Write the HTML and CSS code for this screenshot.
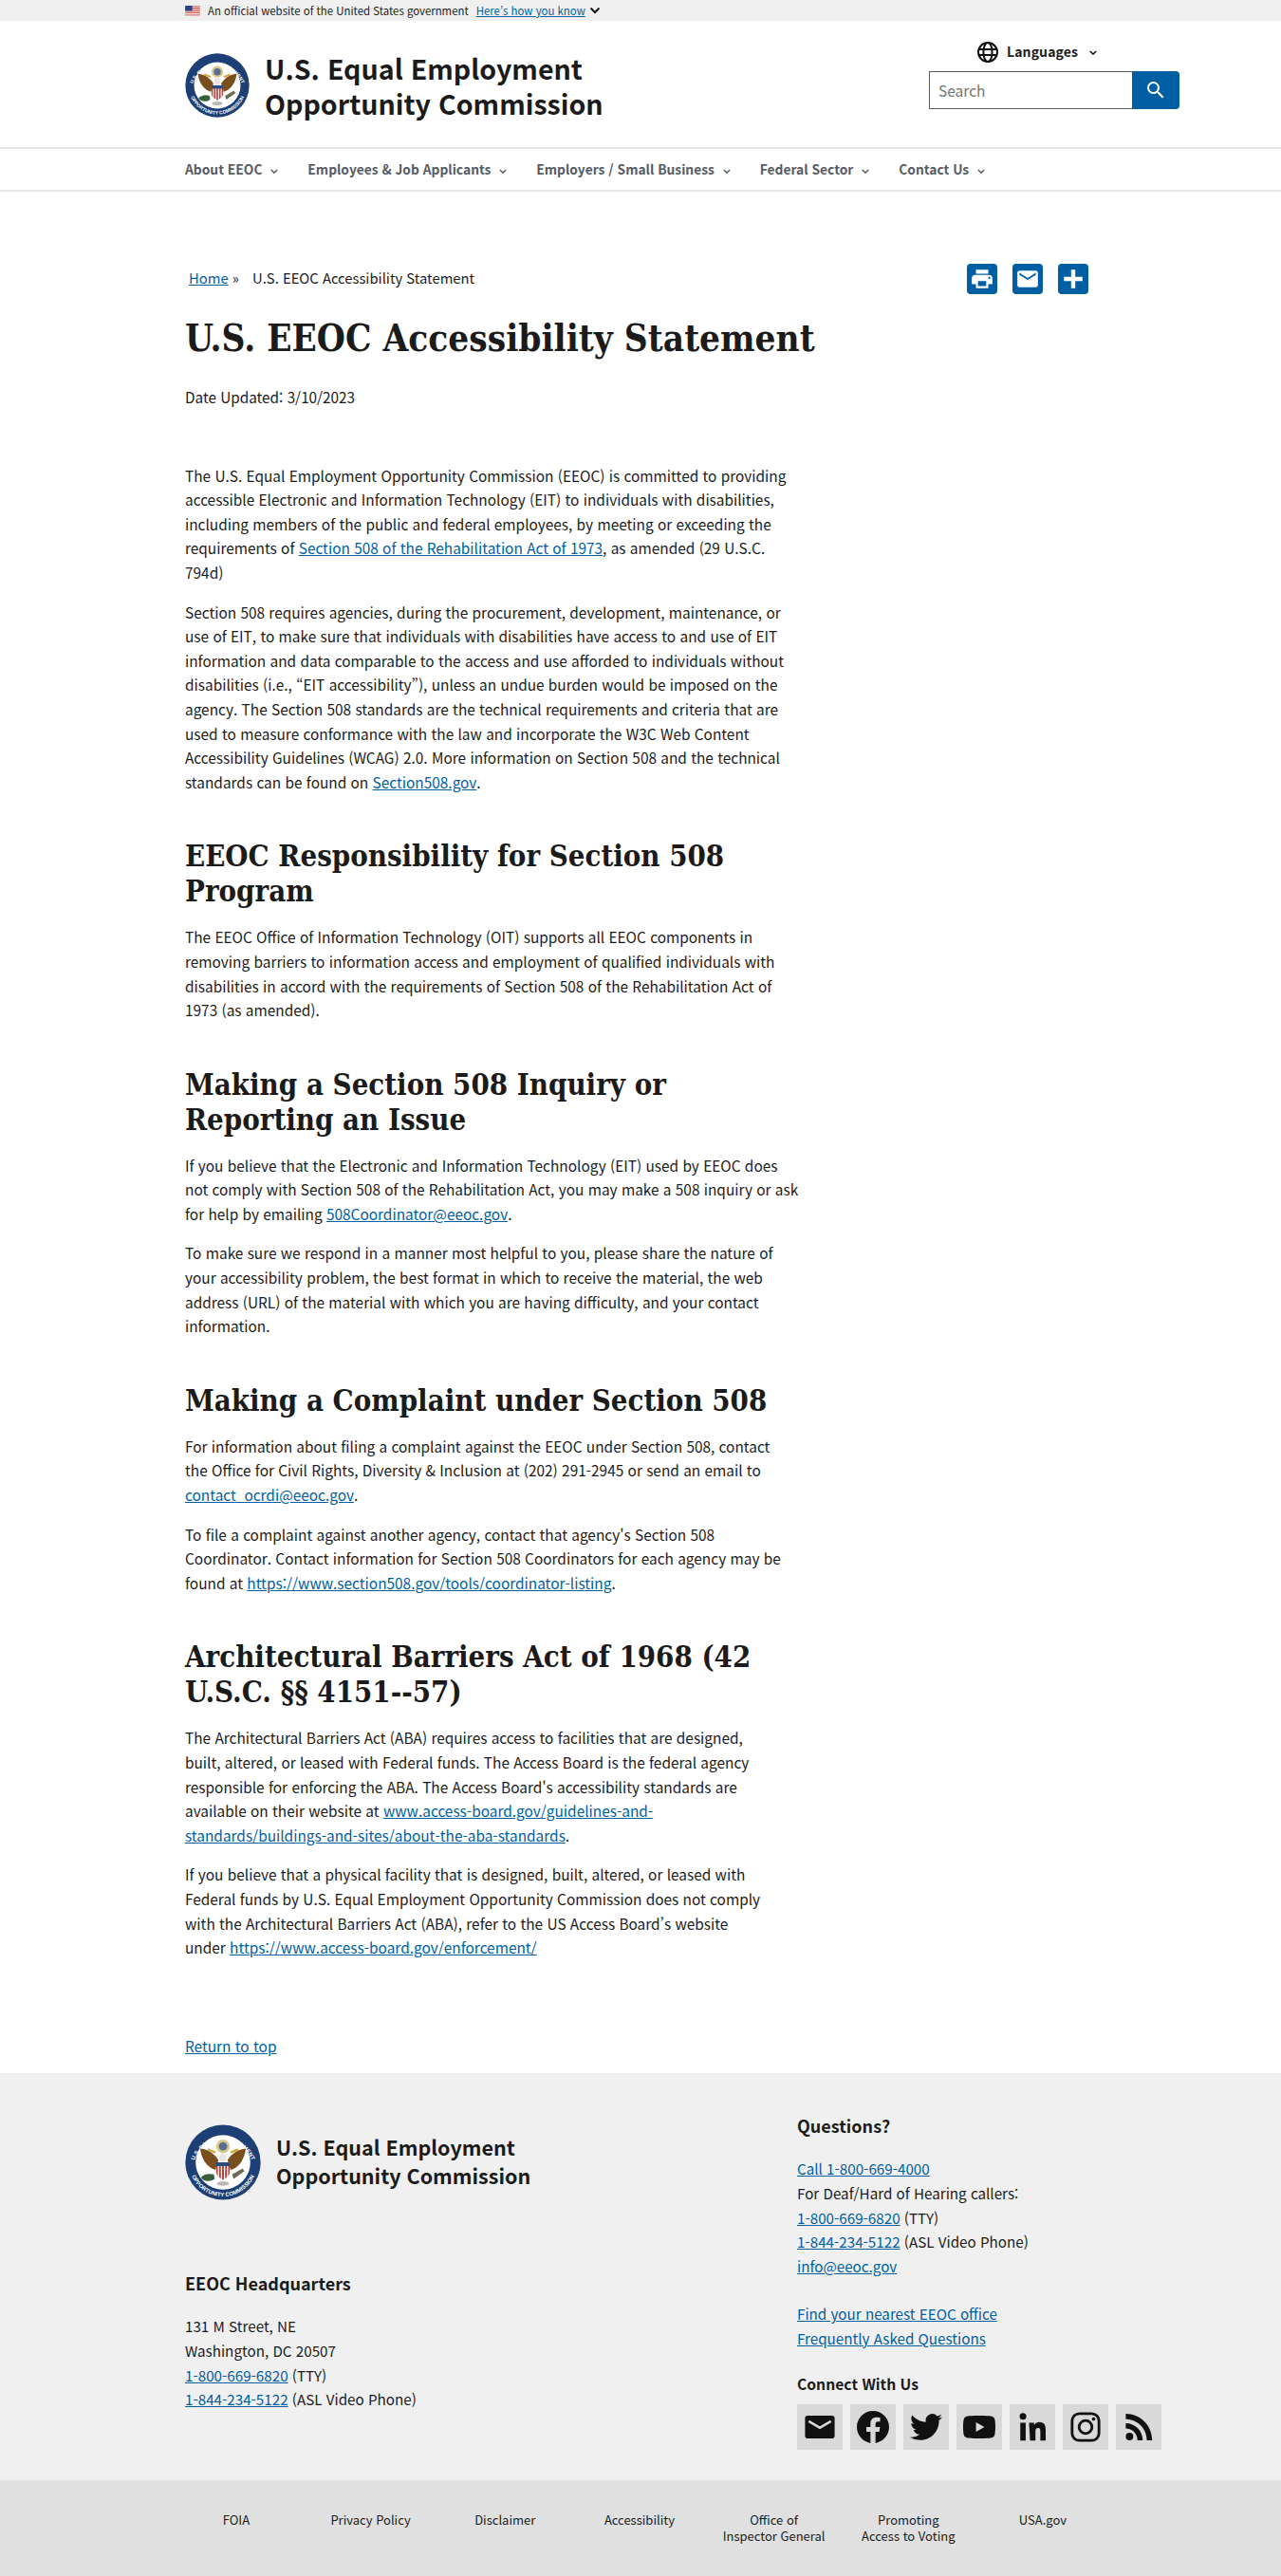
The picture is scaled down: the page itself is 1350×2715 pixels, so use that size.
FILE: index.html
```html
<!DOCTYPE html>
<html lang="ko">
<head>
  <meta charset="UTF-8">
  <meta name="viewport" content="width=device-width, initial-scale=1">
  <title>U.S. EEOC Accessibility Statement</title>
  <link rel="stylesheet" href="styles.css">
</head>
<body>
  <div class="gov-banner">
    <div class="wrap gov-inner">
      <svg class="flag" viewBox="0 0 20 14" width="16" height="11" aria-hidden="true">
        <rect width="20" height="14" fill="#fff"/>
        <path d="M0 1h20M0 3.2h20M0 5.4h20M0 7.6h20M0 9.8h20M0 12.6h20" stroke="#c8403a" stroke-width="1.2"/>
        <rect width="9.5" height="7" fill="#2b3f8c"/>
      </svg>
      <span>An official website of the United States government</span>
      <a href="#">Here’s how you know</a>
      <svg class="chev-black" viewBox="0 0 12 8" width="12" height="8" aria-hidden="true"><path d="M1.5 1.5 6 6l4.5-4.5" fill="none" stroke="#111" stroke-width="2"/></svg>
    </div>
  </div>

  <header class="site-header">
    <div class="wrap header-inner">
      <div class="brand">
        <svg class="brand-seal" viewBox="0 0 100 100" aria-hidden="true">
          <circle cx="50" cy="50" r="49.5" fill="#1d3f75"/>
          <circle cx="50" cy="50" r="36" fill="#fff"/>
          <path id="arcTop" d="M10 56 A40.5 40.5 0 0 1 90 56" fill="none"/>
          <path id="arcBot" d="M5 50 A45 45 0 0 0 95 50" fill="none"/>
          <text class="seal-text"><textPath href="#arcTop" startOffset="50%" text-anchor="middle">U.S. EQUAL EMPLOYMENT</textPath></text>
          <text class="seal-text"><textPath href="#arcBot" startOffset="50%" text-anchor="middle">OPPORTUNITY COMMISSION</textPath></text>
          <circle cx="50" cy="29" r="9" fill="#d9c98a"/>
          <circle cx="50" cy="29" r="5.5" fill="#5a6f8f"/>
          <path d="M44 47 C36 35 27 33 20 32 C21 43 27 56 40 60 Z" fill="#7a4f1e"/>
          <path d="M56 47 C64 35 73 33 80 32 C79 43 73 56 60 60 Z" fill="#7a4f1e"/>
          <path d="M40 37 L30 33 M60 37 L70 33" stroke="#d2a93f" stroke-width="3"/>
          <ellipse cx="50" cy="44" rx="5" ry="6" fill="#e8e6df"/>
          <path d="M41 50 H59 V62 C59 68 54 71 50 73 C46 71 41 68 41 62 Z" fill="#b5483e"/>
          <path d="M41 50 H59 V55 H41 Z" fill="#2b4a7d"/>
          <path d="M44 55 V71 M48 55 V73 M52 55 V73 M56 55 V71" stroke="#fff" stroke-width="1.5"/>
          <path d="M38 66 C30 64 24 66 21 70 C25 76 33 76 39 72 Z" fill="#38603a"/>
          <path d="M62 66 L76 58 L78 62 L64 72 Z" fill="#6b6a55"/>
          <ellipse cx="50" cy="78" rx="8" ry="3" fill="#b9b9b0"/>
        </svg>
        <div class="brand-name">U.S. Equal Employment<br>Opportunity Commission</div>
      </div>
      <div class="header-tools">
        <div class="lang">
          <svg viewBox="0 0 24 24" width="24" height="24" aria-hidden="true">
            <circle cx="12" cy="12" r="10" fill="none" stroke="#111" stroke-width="2"/>
            <ellipse cx="12" cy="12" rx="4.6" ry="10" fill="none" stroke="#111" stroke-width="2"/>
            <path d="M2.5 9h19M2.5 15h19" stroke="#111" stroke-width="2"/>
          </svg>
          <span>Languages</span>
          <svg class="chev" viewBox="0 0 10 6" width="8" height="5" aria-hidden="true"><path d="M1 1l4 4 4-4" fill="none" stroke="#111" stroke-width="1.8"/></svg>
        </div>
        <form class="search">
          <input type="text" placeholder="Search">
          <button type="button" aria-label="Search">
            <svg viewBox="0 0 24 24" width="24" height="24" aria-hidden="true"><path fill="#fff" d="M15.5 14h-.79l-.28-.27A6.471 6.471 0 0 0 16 9.5 6.5 6.5 0 1 0 9.5 16c1.61 0 3.09-.59 4.23-1.57l.27.28v.79l5 4.99L20.49 19l-4.99-5zm-6 0C7.01 14 5 11.99 5 9.5S7.01 5 9.5 5 14 7.01 14 9.5 11.99 14 9.5 14z"/></svg>
          </button>
        </form>
      </div>
    </div>
  </header>

  <nav class="main-nav">
    <div class="wrap nav-inner">
      <a href="#">About EEOC <svg viewBox="0 0 10 6" width="8" height="5" aria-hidden="true"><path d="M1 1l4 4 4-4" fill="none" stroke="#565c65" stroke-width="1.8"/></svg></a>
      <a href="#">Employees &amp; Job Applicants <svg viewBox="0 0 10 6" width="8" height="5" aria-hidden="true"><path d="M1 1l4 4 4-4" fill="none" stroke="#565c65" stroke-width="1.8"/></svg></a>
      <a href="#">Employers / Small Business <svg viewBox="0 0 10 6" width="8" height="5" aria-hidden="true"><path d="M1 1l4 4 4-4" fill="none" stroke="#565c65" stroke-width="1.8"/></svg></a>
      <a href="#">Federal Sector <svg viewBox="0 0 10 6" width="8" height="5" aria-hidden="true"><path d="M1 1l4 4 4-4" fill="none" stroke="#565c65" stroke-width="1.8"/></svg></a>
      <a href="#">Contact Us <svg viewBox="0 0 10 6" width="8" height="5" aria-hidden="true"><path d="M1 1l4 4 4-4" fill="none" stroke="#565c65" stroke-width="1.8"/></svg></a>
    </div>
  </nav>

  <main class="wrap page">
    <div class="crumb-row">
      <div class="crumbs"><a href="#">Home</a> <span class="sep">»</span> <span class="current">U.S. EEOC Accessibility Statement</span></div>
      <div class="share">
        <a href="#" aria-label="Print"><svg viewBox="0 0 24 24" width="26" height="26"><path fill="#fff" d="M19 8H5c-1.66 0-3 1.34-3 3v6h4v4h12v-4h4v-6c0-1.66-1.34-3-3-3zm-3 11H8v-5h8v5zm3-7c-.55 0-1-.45-1-1s.45-1 1-1 1 .45 1 1-.45 1-1 1zm-1-9H6v4h12V3z"/></svg></a>
        <a href="#" aria-label="Email"><svg viewBox="0 0 24 24" width="26" height="26"><path fill="#fff" d="M20 4H4c-1.1 0-2 .9-2 2v12c0 1.1.9 2 2 2h16c1.1 0 2-.9 2-2V6c0-1.1-.9-2-2-2zm0 4l-8 5-8-5V6l8 5 8-5v2z"/></svg></a>
        <a href="#" aria-label="Share"><svg viewBox="0 0 24 24" width="26" height="26"><path fill="#fff" d="M10 3h4v7h7v4h-7v7h-4v-7H3v-4h7z"/></svg></a>
      </div>
    </div>

    <h1>U.S. EEOC Accessibility Statement</h1>
    <p class="date">Date Updated: 3/10/2023</p>

    <article class="statement">
      <p>The U.S. Equal Employment Opportunity Commission (EEOC) is committed to providing accessible Electronic and Information Technology (EIT) to individuals with disabilities, including members of the public and federal employees, by meeting or exceeding the requirements of <a href="#">Section 508 of the Rehabilitation Act of 1973</a>, as amended (29 U.S.C. 794d)</p>
      <p>Section 508 requires agencies, during the procurement, development, maintenance, or use of EIT, to make sure that individuals with disabilities have access to and use of EIT information and data comparable to the access and use afforded to individuals without disabilities (i.e., “EIT accessibility”), unless an undue burden would be imposed on the agency. The Section 508 standards are the technical requirements and criteria that are used to measure conformance with the law and incorporate the W3C Web Content Accessibility Guidelines (WCAG) 2.0. More information on Section 508 and the technical standards can be found on <a href="#">Section508.gov</a>.</p>

      <h2>EEOC Responsibility for Section 508 Program</h2>
      <p>The EEOC Office of Information Technology (OIT) supports all EEOC components in removing barriers to information access and employment of qualified individuals with disabilities in accord with the requirements of Section 508 of the Rehabilitation Act of 1973 (as amended).</p>

      <h2>Making a Section 508 Inquiry or Reporting an Issue</h2>
      <p class="wide">If you believe that the Electronic and Information Technology (EIT) used by EEOC does not comply with Section 508 of the Rehabilitation Act, you may make a 508 inquiry or ask for help by emailing <a href="#">508Coordinator@eeoc.gov</a>.</p>
      <p>To make sure we respond in a manner most helpful to you, please share the nature of your accessibility problem, the best format in which to receive the material, the web address (URL) of the material with which you are having difficulty, and your contact information.</p>

      <h2>Making a Complaint under Section 508</h2>
      <p>For information about filing a complaint against the EEOC under Section 508, contact the Office for Civil Rights, Diversity &amp; Inclusion at (202) 291-2945 or send an email to <a href="#">contact_ocrdi@eeoc.gov</a>.</p>
      <p>To file a complaint against another agency, contact that agency's Section 508 Coordinator. Contact information for Section 508 Coordinators for each agency may be found at <a href="#">https://www.section508.gov/tools/coordinator-listing</a>.</p>

      <h2>Architectural Barriers Act of 1968 (42 U.S.C. §§ 4151--57)</h2>
      <p>The Architectural Barriers Act (ABA) requires access to facilities that are designed,<br>built, altered, or leased with Federal funds. The Access Board is the federal agency responsible for enforcing the ABA. The Access Board's accessibility standards are available on their website at <a href="#">www.access-board.gov/guidelines-and-standards/buildings-and-sites/about-the-aba-standards</a>.</p>
      <p>If you believe that a physical facility that is designed, built, altered, or leased with Federal funds by U.S. Equal Employment Opportunity Commission does not comply with the Architectural Barriers Act (ABA), refer to the US Access Board’s website<br>under <a href="#">https://www.access-board.gov/enforcement/</a></p>
    </article>

    <a class="to-top" href="#">Return to top</a>
  </main>

  <footer>
    <div class="foot-main">
      <div class="wrap foot-cols">
        <div class="foot-left">
          <div class="foot-brand">
            <svg class="foot-seal" viewBox="0 0 100 100" aria-hidden="true">
              <circle cx="50" cy="50" r="49.5" fill="#1d3f75"/>
              <circle cx="50" cy="50" r="36" fill="#fff"/>
              <path id="arcTop2" d="M10 56 A40.5 40.5 0 0 1 90 56" fill="none"/>
              <path id="arcBot2" d="M5 50 A45 45 0 0 0 95 50" fill="none"/>
              <text class="seal-text"><textPath href="#arcTop2" startOffset="50%" text-anchor="middle">U.S. EQUAL EMPLOYMENT</textPath></text>
              <text class="seal-text"><textPath href="#arcBot2" startOffset="50%" text-anchor="middle">OPPORTUNITY COMMISSION</textPath></text>
              <circle cx="50" cy="29" r="9" fill="#d9c98a"/>
              <circle cx="50" cy="29" r="5.5" fill="#5a6f8f"/>
              <path d="M44 47 C36 35 27 33 20 32 C21 43 27 56 40 60 Z" fill="#7a4f1e"/>
              <path d="M56 47 C64 35 73 33 80 32 C79 43 73 56 60 60 Z" fill="#7a4f1e"/>
              <path d="M40 37 L30 33 M60 37 L70 33" stroke="#d2a93f" stroke-width="3"/>
              <ellipse cx="50" cy="44" rx="5" ry="6" fill="#e8e6df"/>
              <path d="M41 50 H59 V62 C59 68 54 71 50 73 C46 71 41 68 41 62 Z" fill="#b5483e"/>
              <path d="M41 50 H59 V55 H41 Z" fill="#2b4a7d"/>
              <path d="M44 55 V71 M48 55 V73 M52 55 V73 M56 55 V71" stroke="#fff" stroke-width="1.5"/>
              <path d="M38 66 C30 64 24 66 21 70 C25 76 33 76 39 72 Z" fill="#38603a"/>
              <path d="M62 66 L76 58 L78 62 L64 72 Z" fill="#6b6a55"/>
              <ellipse cx="50" cy="78" rx="8" ry="3" fill="#b9b9b0"/>
            </svg>
            <div class="foot-name">U.S. Equal Employment<br>Opportunity Commission</div>
          </div>
          <h3 class="hq">EEOC Headquarters</h3>
          <p>131 M Street, NE<br>Washington, DC 20507<br><a href="#">1-800-669-6820</a> (TTY)<br><a href="#">1-844-234-5122</a> (ASL Video Phone)</p>
        </div>
        <div class="foot-right">
          <h3>Questions?</h3>
          <p><a href="#">Call 1-800-669-4000</a><br>For Deaf/Hard of Hearing callers:<br><a href="#">1-800-669-6820</a> (TTY)<br><a href="#">1-844-234-5122</a> (ASL Video Phone)<br><a href="#">info@eeoc.gov</a></p>
          <p class="foot-links"><a href="#">Find your nearest EEOC office</a><br><a href="#">Frequently Asked Questions</a></p>
          <h4>Connect With Us</h4>
          <div class="social">
            <a href="#" aria-label="Email"><svg viewBox="0 0 24 24"><path d="M3 3.5h18a2 2 0 0 1 2 2v13a2 2 0 0 1-2 2H3a2 2 0 0 1-2-2v-13a2 2 0 0 1 2-2zm1.2 3.4-.9 1.5L12 13.5l8.7-5.1-.9-1.5L12 11.4z"/></svg></a>
            <a href="#" aria-label="Facebook"><svg viewBox="0 0 24 24"><path d="M24 12.07C24 5.44 18.63.07 12 .07S0 5.44 0 12.07c0 5.99 4.39 10.95 10.13 11.85v-8.38H7.08v-3.47h3.05V9.43c0-3.01 1.79-4.67 4.53-4.67 1.31 0 2.69.23 2.69.23v2.95h-1.51c-1.49 0-1.96.93-1.96 1.87v2.26h3.33l-.53 3.47h-2.8v8.38C19.61 23.02 24 18.06 24 12.07z"/></svg></a>
            <a href="#" aria-label="Twitter"><svg viewBox="0 0 24 24"><path d="M23.95 4.57a10 10 0 0 1-2.82.77 4.96 4.96 0 0 0 2.16-2.72c-.95.55-2 .96-3.12 1.19a4.92 4.92 0 0 0-8.38 4.48C7.69 8.1 4.07 6.13 1.64 3.16a4.82 4.82 0 0 0-.67 2.47c0 1.71.87 3.2 2.19 4.1a4.9 4.9 0 0 1-2.23-.61v.06c0 2.38 1.69 4.37 3.95 4.83a5 5 0 0 1-2.21.08 4.94 4.94 0 0 0 4.6 3.42A9.87 9.87 0 0 1 0 19.54a14 14 0 0 0 7.56 2.21c9.05 0 14-7.5 14-13.98 0-.21 0-.42-.02-.63a9.94 9.94 0 0 0 2.41-2.57z"/></svg></a>
            <a href="#" aria-label="YouTube"><svg viewBox="0 0 24 24"><path d="M23.5 6.2a3 3 0 0 0-2.1-2.1C19.5 3.55 12 3.55 12 3.55s-7.5 0-9.4.55A3 3 0 0 0 .5 6.2C0 8.1 0 12 0 12s0 3.9.5 5.8a3 3 0 0 0 2.1 2.1c1.9.55 9.4.55 9.4.55s7.5 0 9.4-.55a3 3 0 0 0 2.1-2.1C24 15.9 24 12 24 12s0-3.9-.5-5.8zM9.6 15.6V8.4l6.2 3.6-6.2 3.6z"/></svg></a>
            <a href="#" aria-label="LinkedIn"><svg viewBox="0 0 24 24"><path d="M4.98 1.5a2.5 2.5 0 1 1 0 5 2.5 2.5 0 0 1 0-5zM3 8.75h4V22H3zM9.5 8.75h3.8v1.8h.05c.53-1 1.83-2.3 3.77-2.3 4.03 0 4.78 2.65 4.78 6.1V22h-4v-6.5c0-1.2-.02-2.74-1.67-2.74-1.67 0-1.93 1.3-1.93 2.65V22h-4z"/></svg></a>
            <a href="#" aria-label="Instagram"><svg viewBox="0 0 24 24"><rect x="2" y="2" width="20" height="20" rx="5.5" fill="none" stroke="#111" stroke-width="2"/><circle cx="12" cy="12" r="4.8" fill="none" stroke="#111" stroke-width="2"/><circle cx="18" cy="6" r="1.3"/></svg></a>
            <a href="#" aria-label="RSS"><svg viewBox="0 0 24 24"><circle cx="5.2" cy="19" r="2.8"/><path d="M2.4 2.2v3.9c8.7 0 15.7 7 15.7 15.7H22C22 11 13.2 2.2 2.4 2.2zm0 7v3.9c4.8 0 8.7 3.9 8.7 8.7H15C15 14.8 9.4 9.2 2.4 9.2z"/></svg></a>
          </div>
        </div>
      </div>
    </div>
    <div class="foot-sub">
      <ul class="sub-links">
        <li>FOIA</li>
        <li>Privacy Policy</li>
        <li>Disclaimer</li>
        <li>Accessibility</li>
        <li>Office of<br>Inspector General</li>
        <li>Promoting<br>Access to Voting</li>
        <li>USA.gov</li>
      </ul>
    </div>
  </footer>
</body>
</html>
```

FILE: styles.css
```css
/* Reset and globals */
* {
  margin: 0;
  padding: 0;
  box-sizing: border-box;
}
body {
  font-family: "Noto Sans CJK KR", "Open Sans", sans-serif;
  font-size: 15.4px;
  line-height: 25.6px;
  color: #1b1b1b;
  background: #fff;
}
a {
  color: #005ea2;
}
.seal-text {
  font-family: "Liberation Sans", sans-serif;
  font-size: 7.4px;
  font-weight: 700;
  fill: #fff;
}
.wrap {
  width: 1350px;
  padding: 0 107px 0 195px;
}

/* Gov banner */
.gov-banner {
  height: 22px;
  background: #f0f0f0;
  font-size: 11.4px;
  line-height: 22px;
}
.gov-inner {
  display: flex;
  align-items: center;
}
.flag {
  margin-right: 8px;
}
.gov-inner a {
  margin-left: 8px;
  margin-right: 4px;
}

/* Header */
.site-header {
  height: 133px;
}
.header-inner {
  display: flex;
  justify-content: space-between;
  height: 133px;
}
.brand {
  display: flex;
  align-items: center;
  gap: 16px;
  padding-top: 3px;
}
.brand-seal {
  width: 68px;
  height: 68px;
}
.brand-name {
  font-size: 28.6px;
  line-height: 37px;
  font-weight: 700;
}
.header-tools {
  width: 264px;
  padding-top: 21px;
}
.lang {
  display: flex;
  align-items: center;
  justify-content: center;
  gap: 8px;
  height: 24px;
  padding-right: 37px;
  font-size: 14px;
  font-weight: 700;
  letter-spacing: 0.1px;
}
.lang .chev {
  margin-left: 4px;
}
.search {
  display: flex;
  height: 40px;
  margin-top: 8px;
}
.search input {
  width: 214px;
  height: 40px;
  padding: 0 9px;
  border: 1px solid #565c65;
  border-right: 0;
  font-family: inherit;
  font-size: 15.5px;
}
.search input::placeholder {
  color: #757575;
}
.search button {
  width: 50px;
  height: 40px;
  border: 0;
  border-radius: 0 4px 4px 0;
  background: #005ea2;
  display: flex;
  align-items: center;
  justify-content: center;
}

/* Main nav */
.main-nav {
  height: 47px;
  border-top: 2px solid #e6e6e6;
  border-bottom: 2px solid #e6e6e6;
}
.nav-inner {
  display: flex;
  gap: 31px;
  line-height: 43px;
}
.main-nav a {
  color: #565c65;
  font-size: 13.8px;
  font-weight: 700;
  text-decoration: none;
}
.main-nav svg {
  margin-left: 5px;
  vertical-align: 1px;
}

/* Page body */
.page {
  padding-top: 76px;
}
.crumb-row {
  display: flex;
  justify-content: space-between;
  height: 32px;
  width: 952px;
}
.crumbs {
  font-size: 14.8px;
  line-height: 30px;
  padding-left: 4px;
}
.sep {
  margin-right: 10px;
}
.share {
  display: flex;
  gap: 16px;
}
.share a {
  width: 32px;
  height: 32px;
  border-radius: 4px;
  background: #005ea2;
  display: flex;
  align-items: center;
  justify-content: center;
}
h1, h2 {
  font-family: "DejaVu Serif", serif;
  font-stretch: condensed;
  font-weight: 700;
  color: #1b1b1b;
}
h1 {
  font-size: 38.4px;
  line-height: 50px;
  margin-top: 22px;
}
.date {
  margin-top: 24px;
  font-size: 15.3px;
}
.statement {
  width: 635px;
  margin-top: 57px;
}
.statement p {
  margin-bottom: 16px;
}
.statement .wide {
  margin-right: -13px;
}
h2 {
  font-size: 30.9px;
  line-height: 37px;
  margin-top: 47px;
  margin-bottom: 17px;
}
.to-top {
  display: block;
  margin-top: 78px;
  margin-bottom: 16px;
}

/* Footer */
.foot-main {
  height: 428px;
  background: #f0f0f0;
  padding-top: 42px;
  font-size: 15.2px;
}
.foot-cols {
  display: flex;
}
.foot-left {
  width: 645px;
}
.foot-brand {
  display: flex;
  align-items: center;
  gap: 16px;
  margin-top: 12px;
}
.foot-seal {
  width: 80px;
  height: 80px;
}
.foot-name {
  font-size: 21.5px;
  line-height: 30px;
  font-weight: 700;
  margin-top: -3px;
}
h3 {
  font-size: 18px;
  line-height: 26px;
  font-weight: 700;
}
.hq {
  margin-top: 74px;
  margin-bottom: 20px;
}
.foot-right h3 {
  margin-bottom: 20px;
}
.foot-links {
  margin-top: 25px;
}
h4 {
  font-size: 15.7px;
  line-height: 26px;
  font-weight: 700;
  margin-top: 22px;
  margin-bottom: 8px;
}
.social {
  display: flex;
  gap: 8px;
}
.social a {
  width: 48px;
  height: 48px;
  background: #d9d9d9;
  display: flex;
  align-items: center;
  justify-content: center;
}
.social svg {
  width: 34px;
  height: 34px;
  fill: #111;
}
.foot-sub {
  height: 103px;
  background: #e0e0e0;
  border-top: 2px solid #e8e8e8;
  padding-top: 32px;
}
.sub-links {
  list-style: none;
  display: grid;
  grid-template-columns: repeat(7, 141.7px);
  margin-left: 178px;
  font-size: 13px;
  line-height: 17px;
  text-align: center;
}
```
